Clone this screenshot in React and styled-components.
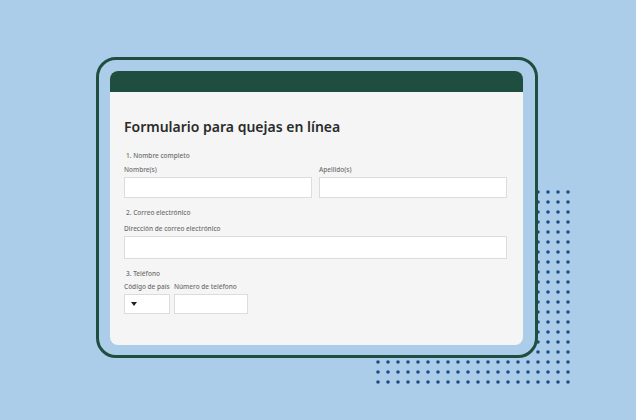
import React from "react";
import styled, { createGlobalStyle } from "styled-components";

const COLOR = {
  sky: "#abcdea",
  pine: "#1f4e40",
  dot: "#1d4d88",
  card: "#f5f5f5",
  line: "#dcdcdc",
  text: "#2b2b2b",
  label: "#6e6e6e",
};

const GlobalStyle = createGlobalStyle`
  * { box-sizing: border-box; }
  html, body { margin: 0; padding: 0; }
  body {
    background: ${COLOR.sky};
    font-family: "Noto Sans", "Liberation Sans", sans-serif;
  }
`;

const Page = styled.div`
  position: relative;
  width: 636px;
  height: 420px;
  padding: 57px 0 0 96px;
  overflow: hidden;
`;

const Dots = styled.svg`
  position: absolute;
  left: 373px;
  top: 187px;
`;

const Frame = styled.div`
  position: relative;
  width: 442px;
  height: 301px;
  padding: 11px 12px 10px 11px;
  border: 3px solid ${COLOR.pine};
  border-radius: 20px;
  background: ${COLOR.sky};
`;

const Card = styled.div`
  height: 100%;
  display: flex;
  flex-direction: column;
  background: ${COLOR.card};
  border-radius: 8px;
  overflow: hidden;
`;

const Header = styled.div`
  height: 21px;
  flex: none;
  background: ${COLOR.pine};
`;

const Body = styled.div`
  padding: 25px 16px 0 14px;
  display: flex;
  flex-direction: column;
`;

const Title = styled.h1`
  margin: 0 0 14px;
  font-size: 14px;
  line-height: 20px;
  font-weight: 600;
  color: ${COLOR.text};
`;

const Section = styled.div`
  display: flex;
  flex-direction: column;
  margin-bottom: ${(p) => p.$gap || 0}px;
`;

const Question = styled.div`
  font-size: 6.5px;
  line-height: 9px;
  font-weight: 500;
  color: ${COLOR.label};
  padding-left: 2px;
  margin-bottom: ${(p) => p.$mb ?? 5}px;
`;

const Row = styled.div`
  display: flex;
  gap: ${(p) => p.$gap || 7}px;
  align-items: flex-end;
`;

const Field = styled.div`
  display: flex;
  flex-direction: column;
  flex: ${(p) => (p.$width ? "none" : 1)};
  width: ${(p) => (p.$width ? `${p.$width}px` : "auto")};
`;

const Label = styled.div`
  font-size: 6.5px;
  line-height: 9px;
  font-weight: 500;
  color: ${COLOR.label};
  margin-bottom: 3px;
`;

const Input = styled.div`
  height: ${(p) => p.$h || 21}px;
  background: #fff;
  border: 1px solid ${COLOR.line};
  display: flex;
  align-items: center;
  padding-left: 6px;
`;

const Caret = styled.span`
  width: 0;
  height: 0;
  border-left: 3px solid transparent;
  border-right: 3px solid transparent;
  border-top: 4px solid #222;
`;

function DotGrid() {
  return (
    <Dots width="200" height="200" viewBox="0 0 200 200">
      <defs>
        <pattern id="dots" width="10" height="10" patternUnits="userSpaceOnUse">
          <circle cx="5" cy="5" r="1.8" fill={COLOR.dot} />
        </pattern>
      </defs>
      <rect width="200" height="200" fill="url(#dots)" />
    </Dots>
  );
}

export default function App() {
  return (
    <>
      <GlobalStyle />
      <Page>
        <DotGrid />
        <Frame>
          <Card>
            <Header />
            <Body>
              <Title>Formulario para quejas en línea</Title>

              <Section $gap={10}>
                <Question>1. Nombre completo</Question>
                <Row>
                  <Field>
                    <Label>Nombre(s)</Label>
                    <Input />
                  </Field>
                  <Field>
                    <Label>Apellido(s)</Label>
                    <Input />
                  </Field>
                </Row>
              </Section>

              <Section $gap={10}>
                <Question $mb={7}>2. Correo electrónico</Question>
                <Field>
                  <Label>Dirección de correo electrónico</Label>
                  <Input $h={23} />
                </Field>
              </Section>

              <Section>
                <Question $mb={4}>3. Teléfono</Question>
                <Row $gap={4}>
                  <Field $width={46}>
                    <Label>Código de país</Label>
                    <Input $h={20}>
                      <Caret />
                    </Input>
                  </Field>
                  <Field $width={74}>
                    <Label>Número de teléfono</Label>
                    <Input $h={20} />
                  </Field>
                </Row>
              </Section>
            </Body>
          </Card>
        </Frame>
      </Page>
    </>
  );
}
